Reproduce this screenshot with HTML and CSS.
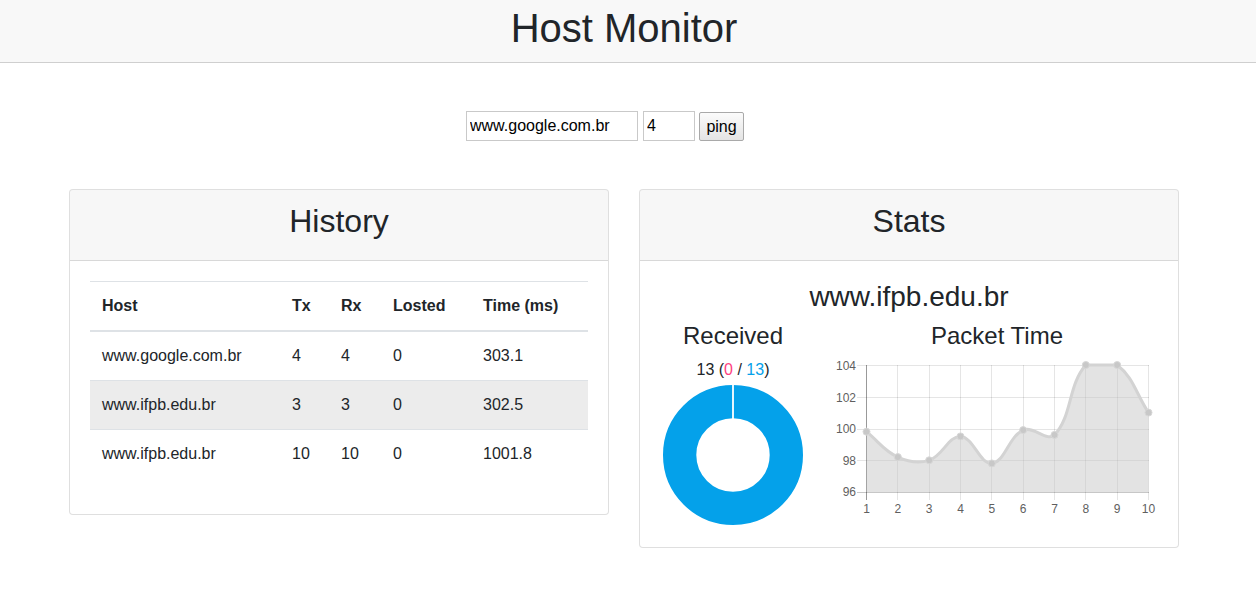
FILE: index.html
```html
<!DOCTYPE html>
<html lang="en">
<head>
<meta charset="utf-8">
<title>Host Monitor</title>
<link rel="stylesheet" href="styles.css">
</head>
<body>
<header class="topbar">
  <div class="topbar-inner"><h1 class="title">Host Monitor</h1></div>
</header>
<main class="page">
  <form class="ping-form">
    <input class="host-input" type="text" value="www.google.com.br">
    <input class="count-input" type="text" value="4">
    <button class="ping-btn" type="button">ping</button>
  </form>
  <div class="cards">
    <section class="card">
      <div class="card-header"><h2>History</h2></div>
      <div class="card-body">
        <table class="history">
          <colgroup>
            <col class="c-host"><col class="c-tx"><col class="c-rx"><col class="c-lost"><col class="c-time">
          </colgroup>
          <thead>
            <tr><th>Host</th><th>Tx</th><th>Rx</th><th>Losted</th><th>Time (ms)</th></tr>
          </thead>
          <tbody>
            <tr><td>www.google.com.br</td><td>4</td><td>4</td><td>0</td><td>303.1</td></tr>
            <tr class="is-hover"><td>www.ifpb.edu.br</td><td>3</td><td>3</td><td>0</td><td>302.5</td></tr>
            <tr><td>www.ifpb.edu.br</td><td>10</td><td>10</td><td>0</td><td>1001.8</td></tr>
          </tbody>
        </table>
      </div>
    </section>
    <section class="card">
      <div class="card-header"><h2>Stats</h2></div>
      <div class="card-body stats-body">
        <h3 class="stats-host">www.ifpb.edu.br</h3>
        <div class="stats-grid">
          <div class="stats-col">
            <h4>Received</h4>
            <div class="ratio">13 (<span class="lost">0</span> / <span class="recv">13</span>)</div>
            <svg class="donut" width="146" height="146" viewBox="0 0 146 146">
              <circle cx="73" cy="73" r="53.35" fill="none" stroke="#04a1ea" stroke-width="33.3"/>
              <line x1="73" y1="2.5" x2="73" y2="37" stroke="#fff" stroke-width="1.8"/>
            </svg>
          </div>
          <div class="stats-col">
            <h4>Packet Time</h4>
            <svg class="line-chart" width="322" height="162" viewBox="0 0 322 162">
              <g class="grid" stroke="rgba(0,0,0,0.1)" stroke-width="1" shape-rendering="crispEdges">
                <line x1="20.5" y1="7.5" x2="312.5" y2="7.5"/>
                <line x1="20.5" y1="39.5" x2="312.5" y2="39.5"/>
                <line x1="20.5" y1="71" x2="312.5" y2="71"/>
                <line x1="20.5" y1="102.5" x2="312.5" y2="102.5"/>
                <line x1="61.83" y1="7" x2="61.83" y2="142"/>
                <line x1="93.17" y1="7" x2="93.17" y2="142"/>
                <line x1="124.5" y1="7" x2="124.5" y2="142"/>
                <line x1="155.83" y1="7" x2="155.83" y2="142"/>
                <line x1="187.17" y1="7" x2="187.17" y2="142"/>
                <line x1="218.5" y1="7" x2="218.5" y2="142"/>
                <line x1="249.83" y1="7" x2="249.83" y2="142"/>
                <line x1="281.17" y1="7" x2="281.17" y2="142"/>
                <line x1="312.5" y1="7" x2="312.5" y2="142"/>
              </g>
              <line x1="20.5" y1="134.5" x2="312.5" y2="134.5" stroke="rgba(0,0,0,0.22)" shape-rendering="crispEdges"/>
              <line x1="30.5" y1="7" x2="30.5" y2="142" stroke="rgba(0,0,0,0.4)" shape-rendering="crispEdges"/>
              <path d="M30.5,73.7 C43,83.9 47.7,92.7 61.8,99.1 C72.8,104.1 82,106 93.2,102.3 C107.1,97.7 112.3,77.8 124.5,78.4 C137.3,79 143.9,106.6 155.8,105.4 C169,104.1 172.4,78.8 187.2,72.1 C197.5,67.4 211.2,84.5 218.5,76.9 C236.2,58.5 232,26.8 249.8,7 C257.1,7 272.3,7 281.2,7 C297.4,19.3 300,35.6 312.5,54.6 L312.5,134 L30.5,134 Z" fill="rgba(200,200,200,0.5)"/>
              <path d="M30.5,73.7 C43,83.9 47.7,92.7 61.8,99.1 C72.8,104.1 82,106 93.2,102.3 C107.1,97.7 112.3,77.8 124.5,78.4 C137.3,79 143.9,106.6 155.8,105.4 C169,104.1 172.4,78.8 187.2,72.1 C197.5,67.4 211.2,84.5 218.5,76.9 C236.2,58.5 232,26.8 249.8,7 C257.1,7 272.3,7 281.2,7 C297.4,19.3 300,35.6 312.5,54.6" fill="none" stroke="#d3d3d3" stroke-width="3"/>
              <g fill="#c8c8c8" stroke="#d8d8d8" stroke-width="1">
                <circle cx="30.5" cy="73.7" r="3.5"/>
                <circle cx="61.83" cy="99.1" r="3.5"/>
                <circle cx="93.17" cy="102.3" r="3.5"/>
                <circle cx="124.5" cy="78.4" r="3.5"/>
                <circle cx="155.83" cy="105.4" r="3.5"/>
                <circle cx="187.17" cy="72.1" r="3.5"/>
                <circle cx="218.5" cy="76.9" r="3.5"/>
                <circle cx="249.83" cy="7" r="3.5"/>
                <circle cx="281.17" cy="7" r="3.5"/>
                <circle cx="312.5" cy="54.6" r="3.5"/>
              </g>
              <g class="ylabels" fill="#5f5f5f" font-size="12" text-anchor="end">
                <text x="20" y="11.5">104</text>
                <text x="20" y="43.5">102</text>
                <text x="20" y="75">100</text>
                <text x="20" y="106.5">98</text>
                <text x="20" y="138">96</text>
              </g>
              <g class="xlabels" fill="#5f5f5f" font-size="12" text-anchor="middle">
                <text x="30.5" y="155">1</text>
                <text x="61.83" y="155">2</text>
                <text x="93.17" y="155">3</text>
                <text x="124.5" y="155">4</text>
                <text x="155.83" y="155">5</text>
                <text x="187.17" y="155">6</text>
                <text x="218.5" y="155">7</text>
                <text x="249.83" y="155">8</text>
                <text x="281.17" y="155">9</text>
                <text x="312.5" y="155">10</text>
              </g>
            </svg>
          </div>
        </div>
      </div>
    </section>
  </div>
</main>
</body>
</html>
```

FILE: styles.css
```css
html, body {
  margin: 0;
  padding: 0;
}

body {
  font-family: "Liberation Sans", Arial, Helvetica, sans-serif;
  font-size: 16px;
  line-height: 1.5;
  color: #212529;
  background: #fff;
}

.topbar {
  height: 62px;
  background: #f8f8f8;
  border-bottom: 1px solid #cfcfcf;
}

.topbar-inner {
  width: 1248px;
  text-align: center;
}

.title {
  margin: 0;
  padding-top: 4px;
  font-size: 40px;
  font-weight: 400;
  line-height: 48px;
}

.page {
  width: 1248px;
}

.ping-form {
  display: flex;
  justify-content: center;
  align-items: flex-end;
  padding: 48px 38px 48px 0;
}

.host-input,
.count-input {
  box-sizing: border-box;
  height: 30px;
  margin: 0;
  padding: 0 3px;
  border: 1px solid #c9c9c9;
  font-family: "Liberation Sans", Arial, sans-serif;
  font-size: 16px;
  color: #000;
  background: #fff;
}

.host-input {
  width: 172px;
}

.count-input {
  width: 52px;
  margin-left: 5px;
}

.ping-btn {
  box-sizing: border-box;
  width: 45px;
  height: 29px;
  margin: 0 0 0 4px;
  padding: 0;
  border: 1px solid #a9a9a9;
  border-radius: 2px;
  background: linear-gradient(#fbfbfb, #e4e4e4);
  font-family: "Liberation Sans", Arial, sans-serif;
  font-size: 16px;
  color: #000;
}

.cards {
  width: 1110px;
  margin: 0 auto;
  display: grid;
  grid-template-columns: 540px 540px;
  column-gap: 30px;
  align-items: start;
}

.card {
  border: 1px solid rgba(0, 0, 0, 0.125);
  border-radius: 4px;
  background: #fff;
  overflow: hidden;
}

.card-header {
  padding: 12px 20px;
  background: rgba(0, 0, 0, 0.03);
  border-bottom: 1px solid rgba(0, 0, 0, 0.125);
  text-align: center;
}

.card-header h2 {
  margin: 0 0 8px;
  font-size: 32px;
  font-weight: 400;
  line-height: 1.2;
}

.card-body {
  padding: 20px;
}

.history {
  width: 100%;
  table-layout: fixed;
  border-collapse: collapse;
  margin-bottom: 16px;
}

.c-host { width: 190px; }
.c-tx { width: 49px; }
.c-rx { width: 52px; }
.c-lost { width: 90px; }
.c-time { width: 117px; }

.history th,
.history td {
  padding: 12px;
  text-align: left;
  vertical-align: top;
  line-height: 24px;
  border-top: 1px solid #dee2e6;
  white-space: nowrap;
}

.history thead th {
  font-weight: 700;
  border-bottom: 2px solid #dee2e6;
}

.history tr.is-hover {
  background: rgba(0, 0, 0, 0.075);
}

.stats-body {
  padding: 19px 20px 19px;
  text-align: center;
}

.stats-host {
  margin: 0 0 8px;
  font-size: 28px;
  font-weight: 400;
  line-height: 1.2;
}

.stats-grid {
  display: grid;
  grid-template-columns: 146px 322px;
  column-gap: 30px;
}

.stats-col h4 {
  margin: 0 0 7px;
  font-size: 24px;
  font-weight: 400;
  line-height: 1.2;
}

.ratio {
  line-height: 24px;
}

.ratio .lost {
  color: #fd4181;
}

.ratio .recv {
  color: #04a1ea;
}

.donut {
  display: block;
  margin: 0 auto;
}

.line-chart {
  display: block;
  font-family: "Liberation Sans", Arial, sans-serif;
}
```
